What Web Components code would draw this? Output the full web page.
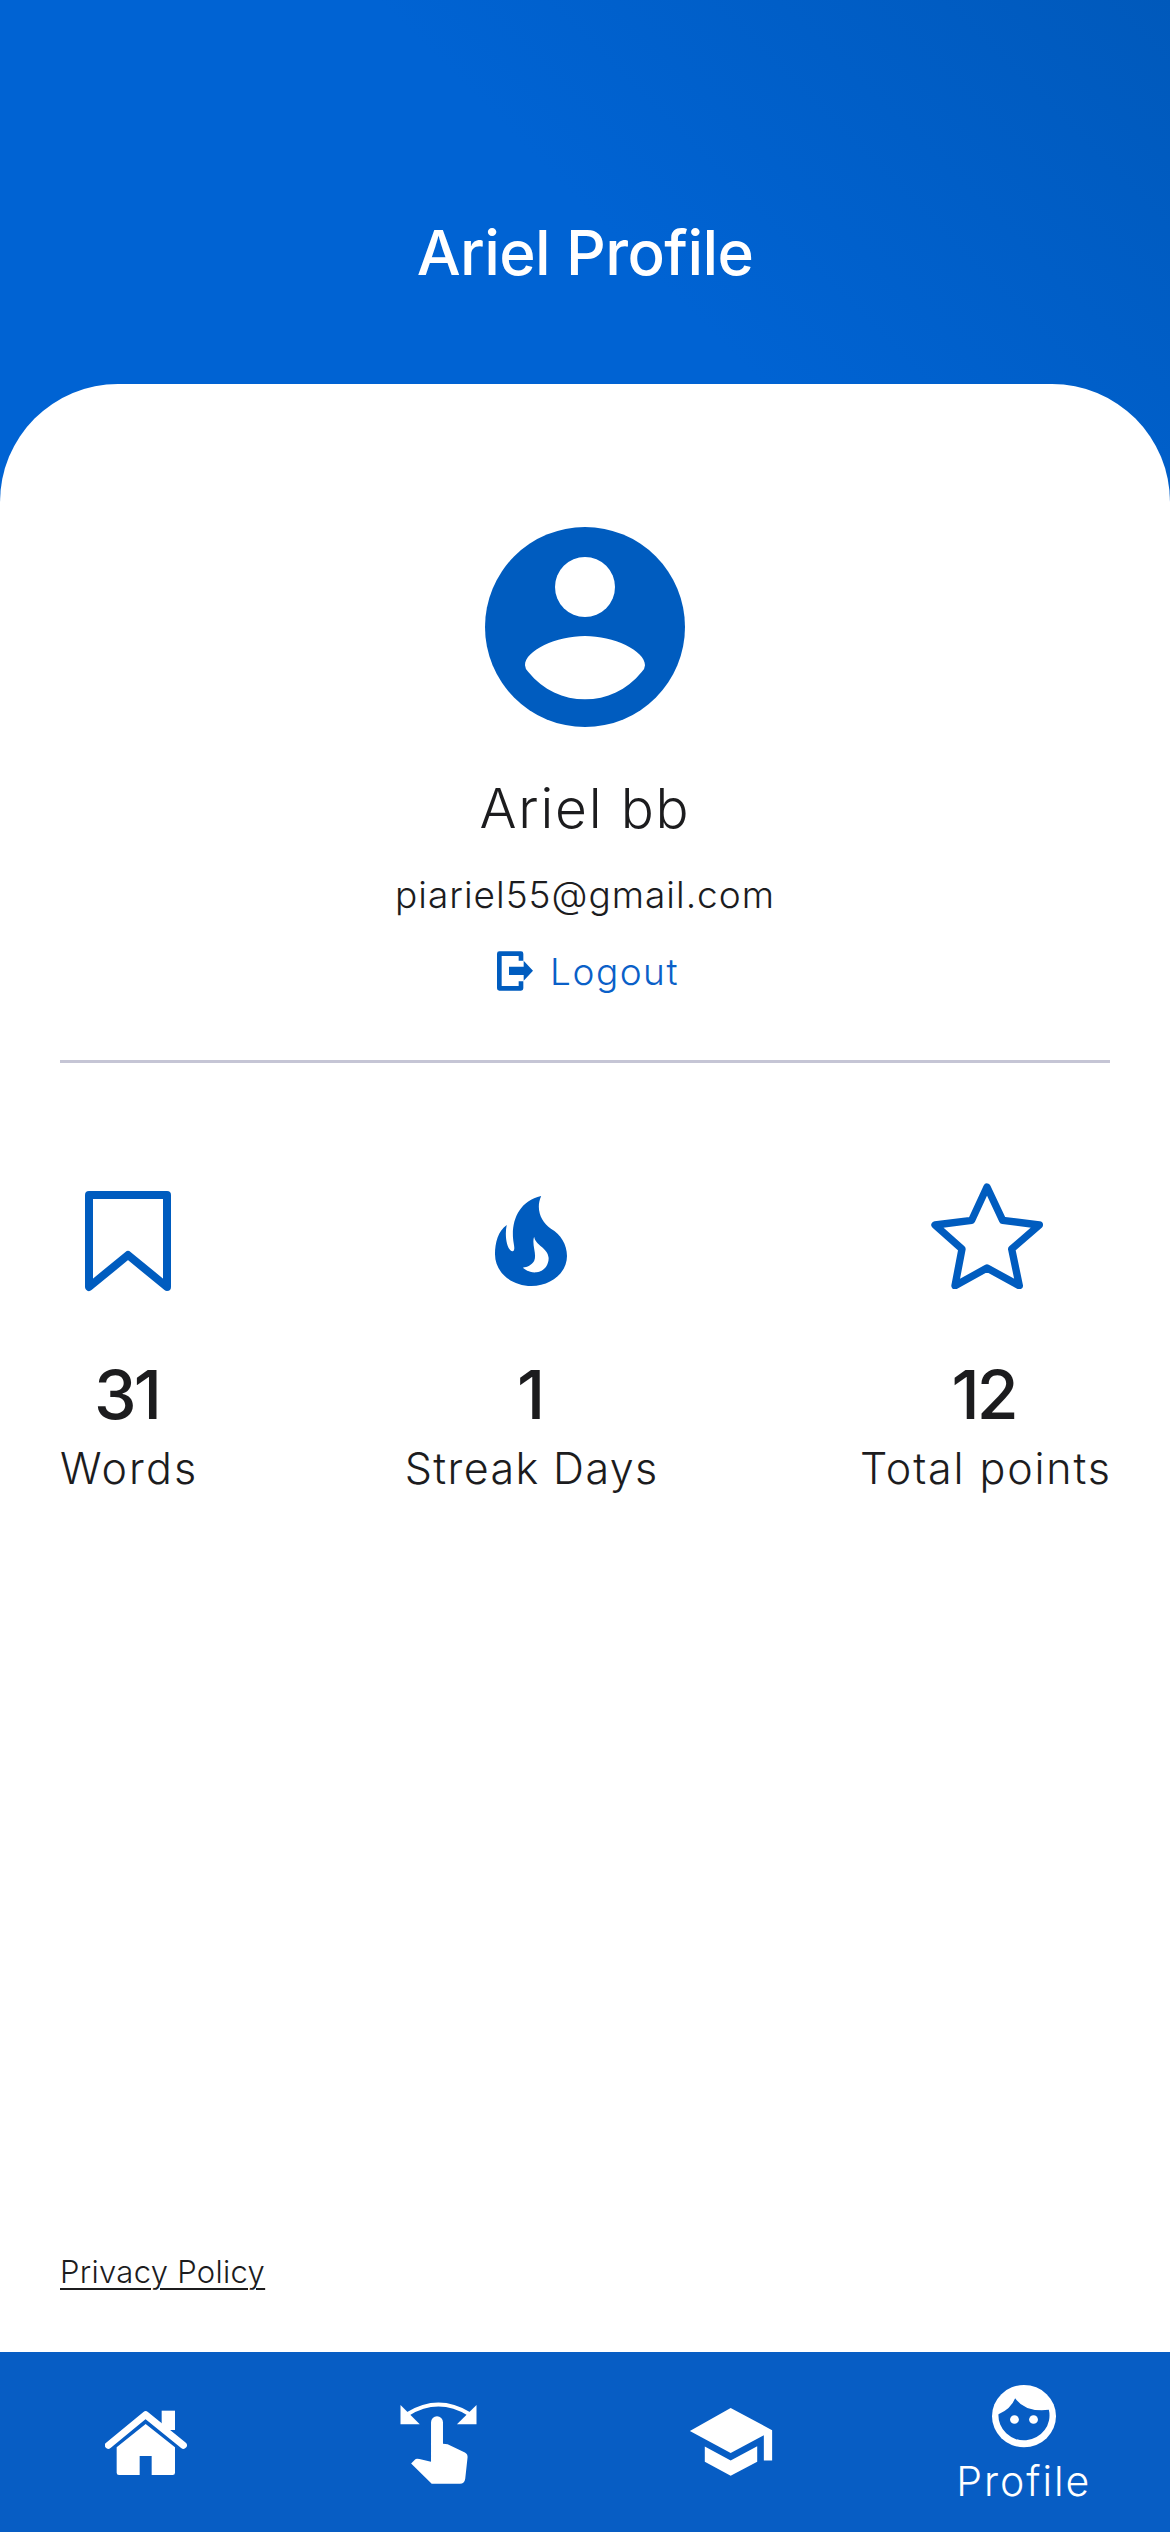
<!DOCTYPE html>
<html>
<head>
<meta charset="utf-8">
<title>Ariel Profile</title>
<style>
html, body { margin: 0; padding: 0; background: #fff; }
body { font-family: Inter, "Liberation Sans", sans-serif; color: #1c1c1e; }
</style>
</head>
<body>
<profile-page>
  <profile-header slot="header">Ariel Profile</profile-header>
  <user-info slot="user" name="Ariel bb" email="piariel55@gmail.com"></user-info>
  <stat-row slot="stats">
    <stat-item value="31" label="Words" style="--track: 2.1px">
      <svg width="86" height="101" viewBox="0 0 86 101"><path d="M4 4H82V96L43 64L4 96Z" fill="none" stroke="#005cbf" stroke-width="8" stroke-linejoin="round"/></svg>
    </stat-item>
    <stat-item value="1" label="Streak Days" style="--track: 1.4px; margin-left: 6px">
      <svg width="72" height="90" viewBox="1162 110 184 270" preserveAspectRatio="none"><path fill="#005cbf" fill-rule="evenodd" d="M1280 110C1225 125 1205 180 1208 235C1209 255 1215 270 1208 276C1195 278 1185 235 1192 197C1170 215 1162 250 1162 285C1162 340 1205 380 1255 380C1305 380 1346 340 1346 290C1346 255 1330 225 1305 208C1280 188 1265 150 1280 110ZM1262 232C1255 255 1270 285 1262 305C1255 318 1245 323 1233 325C1245 337 1255 340 1268 339C1288 337 1300 315 1299 295C1297 265 1265 258 1262 232Z"/></svg>
    </stat-item>
    <stat-item value="12" label="Total points" style="--track: 1.85px">
      <svg style="margin: -10px 0 0 5px" width="112" height="106" viewBox="330 70 336 318"><path d="M498 82L545 182L655 196L572 268L595 378L498 325L402 378L423 268L342 196L452 182Z" fill="none" stroke="#005cbf" stroke-width="22" stroke-linejoin="round"/></svg>
    </stat-item>
  </stat-row>
  <policy-link slot="policy">Privacy Policy</policy-link>
  <bottom-nav slot="nav">
    <nav-item>
      <svg width="82" height="65" viewBox="132 180 246 195"><g fill="#fff"><path d="M302 182H342V240H302Z"/><path d="M167 292L254 222L342 292V368Q342 375 335 375H272V318H236V375H174Q167 375 167 368Z"/></g><path d="M142 286L254 194L367 286" fill="none" stroke="#fff" stroke-width="21" stroke-linecap="round" stroke-linejoin="round"/></svg>
    </nav-item>
    <nav-item>
      <svg width="77" height="83" viewBox="1018 158 229 250"><g fill="#fff"><path d="M1018 170V228H1076Z"/><path d="M1247 170V228H1188Z"/><path d="M1110 222A18 18 0 0 1 1146 222V287L1160 288L1212 313Q1221 318 1220 328L1213 392Q1211 407 1197 407H1112L1050 346L1062 334Q1065 331 1075 333L1110 341Z"/></g><path d="M1040 197Q1132 140 1225 197" fill="none" stroke="#fff" stroke-width="12"/></svg>
    </nav-item>
    <nav-item>
      <svg width="84" height="68" viewBox="142 180 248 205"><path fill="#fff" d="M265 180L390 247V338H365V262L265 316L142 249ZM187 296L265 338L345 295V342L265 384L187 342Z"/></svg>
    </nav-item>
    <nav-item label="Profile">
      <svg width="64" height="63" viewBox="1037 105 188 190" preserveAspectRatio="none"><circle cx="1131" cy="199" r="94" fill="#fff"/><path fill="#075dc4" d="M1056 193Q1092 178 1105 145Q1135 188 1204 180A75 75 0 1 1 1056 193Z"/><circle cx="1103" cy="209" r="13" fill="#fff"/><circle cx="1159" cy="209" r="13" fill="#fff"/></svg>
    </nav-item>
  </bottom-nav>
</profile-page>

<script>
var pageTemplate = document.createElement('template');
pageTemplate.innerHTML = `
<style>
:host {
    display: flex;
    flex-direction: column;
    height: 2532px;
    background: linear-gradient(225deg, #0059bb 0, #0063d3 560px) 0 0 / 1170px 560px no-repeat;
}
.sheet {
    flex: 1;
    display: flex;
    flex-direction: column;
    background: #fff;
    border-radius: 118px 118px 0 0;
    padding: 143px 60px 0;
}
.push { flex: 1; }
</style>
<slot name="header"></slot>
<div class="sheet">
    <slot name="user"></slot>
    <slot name="stats"></slot>
    <div class="push"></div>
    <slot name="policy"></slot>
</div>
<slot name="nav"></slot>
`;

class ProfilePage extends HTMLElement {
    constructor() {
        super();
        this.attachShadow({ mode: "open" });
        this.shadowRoot.appendChild(pageTemplate.content.cloneNode(true));
    }
}

var headerTemplate = document.createElement('template');
headerTemplate.innerHTML = `
<style>
:host {
    display: flex;
    align-items: center;
    justify-content: center;
    height: 384px;
    padding-top: 120px;
    box-sizing: border-box;
    color: #fff;
    font-size: 62px;
    font-weight: 500;
    letter-spacing: -0.6px;
}
</style>
<slot></slot>
`;

class ProfileHeader extends HTMLElement {
    constructor() {
        super();
        this.attachShadow({ mode: "open" });
        this.shadowRoot.appendChild(headerTemplate.content.cloneNode(true));
    }
}

var userTemplate = document.createElement('template');
userTemplate.innerHTML = `
<style>
:host {
    display: flex;
    flex-direction: column;
    align-items: center;
    border-bottom: 3px solid #c5c5d5;
    padding-bottom: 67px;
}
svg { display: block; }
.name {
    margin-top: 46px;
    font-size: 55px;
    line-height: 70px;
    font-weight: 300;
    letter-spacing: 1.8px;
}
.email {
    margin-top: 30px;
    font-size: 37px;
    line-height: 44px;
    font-weight: 300;
    letter-spacing: 1px;
}
.logout {
    display: flex;
    align-items: center;
    gap: 17px;
    margin-top: 32px;
    padding-left: 6px;
    height: 44px;
    color: #0a60c8;
    font-size: 37px;
    font-weight: 300;
    letter-spacing: 1.5px;
}
</style>
<svg width="200" height="200" viewBox="255 80 600 600">
    <circle cx="555" cy="380" r="300" fill="#005cbf"/>
    <circle cx="555" cy="260" r="90" fill="#fff"/>
    <path fill="#fff" d="M555 407C640 407 735 450 735 495Q735 505 725 515C680 570 620 597 555 597C490 597 430 570 385 515Q375 505 375 495C375 450 470 407 555 407Z"/>
</svg>
<div class="name" id="name"></div>
<div class="email" id="email"></div>
<div class="logout">
    <svg width="36" height="40" viewBox="292 1357 108 118">
        <path d="M364 1385V1364H299V1468H364V1447" fill="none" stroke="#005cbf" stroke-width="14" stroke-linejoin="round"/>
        <path d="M328 1403H372V1385L400 1415L372 1445V1428H328Z" fill="#005cbf"/>
    </svg>
    <span>Logout</span>
</div>
`;

class UserInfo extends HTMLElement {
    constructor() {
        super();
        this.attachShadow({ mode: "open" });
        this.shadowRoot.appendChild(userTemplate.content.cloneNode(true));
        this.shadowRoot.getElementById('name').textContent = this.getAttribute('name');
        this.shadowRoot.getElementById('email').textContent = this.getAttribute('email');
    }
}

var statRowTemplate = document.createElement('template');
statRowTemplate.innerHTML = `
<style>
:host {
    display: flex;
    justify-content: space-between;
    margin-top: 124px;
}
</style>
<slot></slot>
`;

class StatRow extends HTMLElement {
    constructor() {
        super();
        this.attachShadow({ mode: "open" });
        this.shadowRoot.appendChild(statRowTemplate.content.cloneNode(true));
    }
}

var statTemplate = document.createElement('template');
statTemplate.innerHTML = `
<style>
:host {
    display: flex;
    flex-direction: column;
    align-items: center;
}
.icon {
    display: flex;
    align-items: center;
    justify-content: center;
    height: 108px;
}
.value {
    margin-top: 61px;
    margin-right: 3px;
    font-size: 68px;
    line-height: 76px;
    font-weight: 500;
    letter-spacing: -3px;
}
.label {
    margin-top: 10px;
    margin-right: calc(-1 * var(--track, 1.5px));
    font-size: 43px;
    line-height: 52px;
    font-weight: 300;
    letter-spacing: var(--track, 1.5px);
    white-space: nowrap;
}
</style>
<div class="icon"><slot></slot></div>
<div class="value" id="value"></div>
<div class="label" id="label"></div>
`;

class StatItem extends HTMLElement {
    constructor() {
        super();
        this.attachShadow({ mode: "open" });
        this.shadowRoot.appendChild(statTemplate.content.cloneNode(true));
        this.shadowRoot.getElementById('value').textContent = this.getAttribute('value');
        this.shadowRoot.getElementById('label').textContent = this.getAttribute('label');
    }
}

var policyTemplate = document.createElement('template');
policyTemplate.innerHTML = `
<style>
:host {
    display: block;
    padding-bottom: 60px;
    font-size: 31px;
    line-height: 40px;
    font-weight: 300;
    letter-spacing: 0.3px;
}
span { text-decoration: underline; text-decoration-thickness: 2px; text-underline-offset: 5px; }
</style>
<span><slot></slot></span>
`;

class PolicyLink extends HTMLElement {
    constructor() {
        super();
        this.attachShadow({ mode: "open" });
        this.shadowRoot.appendChild(policyTemplate.content.cloneNode(true));
    }
}

var navTemplate = document.createElement('template');
navTemplate.innerHTML = `
<style>
:host {
    display: grid;
    grid-template-columns: repeat(4, 1fr);
    height: 180px;
    background: #075dc4;
}
</style>
<slot></slot>
`;

class BottomNav extends HTMLElement {
    constructor() {
        super();
        this.attachShadow({ mode: "open" });
        this.shadowRoot.appendChild(navTemplate.content.cloneNode(true));
    }
}

var navItemTemplate = document.createElement('template');
navItemTemplate.innerHTML = `
<style>
:host {
    display: flex;
    flex-direction: column;
    align-items: center;
    justify-content: center;
    color: #fff;
}
.label {
    margin-top: 9px;
    margin-bottom: -5px;
    font-size: 41px;
    line-height: 48px;
    font-weight: 300;
    letter-spacing: 2px;
}
.label:empty { display: none; }
</style>
<slot></slot>
<div class="label" id="label"></div>
`;

class NavItem extends HTMLElement {
    constructor() {
        super();
        this.attachShadow({ mode: "open" });
        this.shadowRoot.appendChild(navItemTemplate.content.cloneNode(true));
        this.shadowRoot.getElementById('label').textContent = this.getAttribute('label') || '';
    }
}

window.customElements.define("profile-page", ProfilePage);
window.customElements.define("profile-header", ProfileHeader);
window.customElements.define("user-info", UserInfo);
window.customElements.define("stat-row", StatRow);
window.customElements.define("stat-item", StatItem);
window.customElements.define("policy-link", PolicyLink);
window.customElements.define("bottom-nav", BottomNav);
window.customElements.define("nav-item", NavItem);
</script>
</body>
</html>
